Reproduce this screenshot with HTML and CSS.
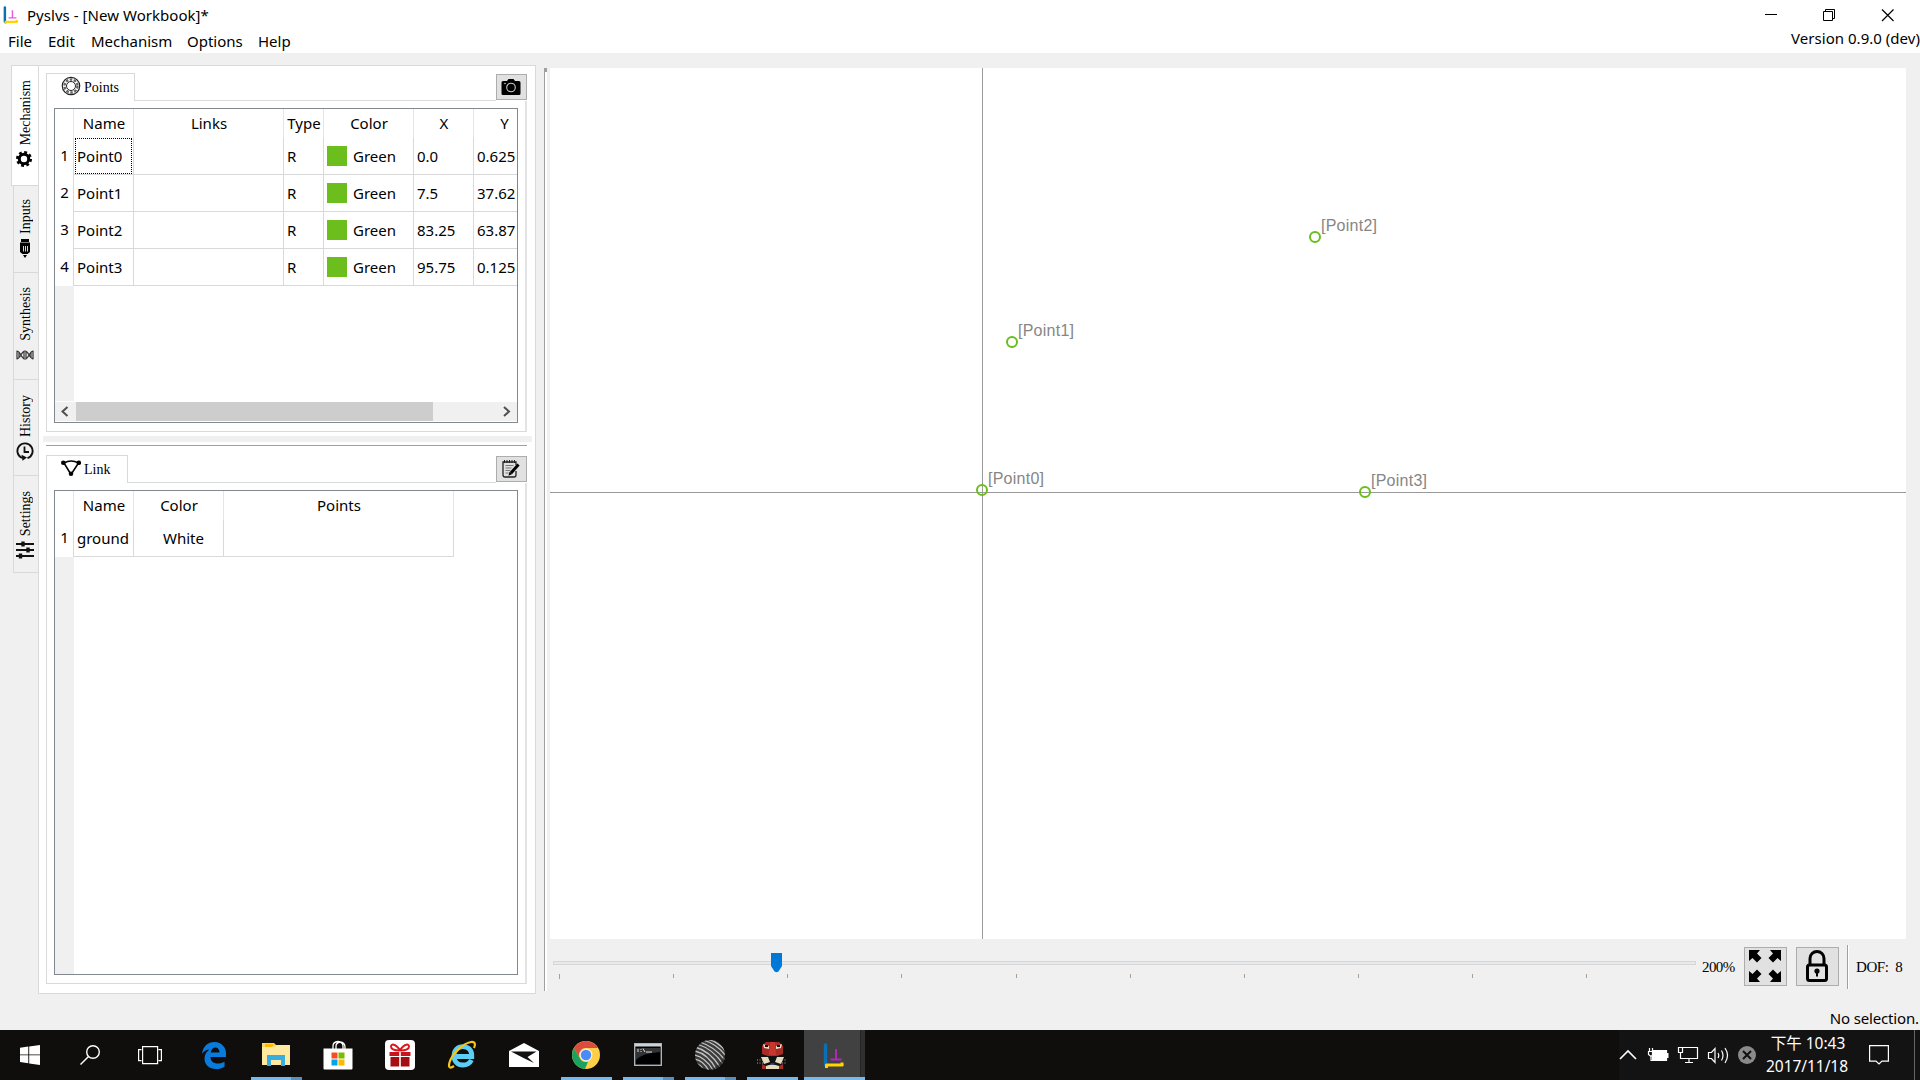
FILE: index.html
```html
<!DOCTYPE html>
<html lang="zh-Hant">
<head>
<meta charset="utf-8">
<title>Pyslvs - [New Workbook]*</title>
<link rel="stylesheet" href="styles.css">
</head>
<body>
<svg class="defs" width="0" height="0">
  <symbol id="logo" viewBox="0 0 22 25">
    <path d="M2.5 2v20" stroke="#0b6fb8" stroke-width="3.4" stroke-linecap="round" fill="none"/>
    <path d="M3.5 22H19" stroke="#ffd400" stroke-width="3.2" stroke-linecap="round" fill="none"/>
    <path d="M2 24h3M19 19.500v3" stroke="#ffd400" stroke-width="3" fill="none"/>
    <path d="M13 6v10M7.500 16.500h11" stroke="currentColor" stroke-width="2" fill="none"/>
  </symbol>
</svg>

<header class="top">
  <div class="titlebar">
    <svg class="title-icon" width="16" height="18"><use href="#logo"/></svg>
    <span class="title">Pyslvs - [New Workbook]*</span>
    <svg class="winctl" width="130" height="14" viewBox="0 0 130 14" fill="none" stroke="#000">
      <path d="M0 6.500h12"/>
      <path d="M58.500 3.500h9v9h-9zM60.500 3.500v-2h9v9h-2"/>
      <path d="M117 1.500l11.500 11.500M128.500 1.500L117 13" stroke-width="1.2"/>
    </svg>
  </div>
  <nav class="menubar">
    <span class="m-file">File</span><span class="m-edit">Edit</span><span class="m-mech">Mechanism</span><span class="m-opt">Options</span><span class="m-help">Help</span>
    <span class="version">Version 0.9.0 (dev)</span>
  </nav>
</header>

<main class="work">
  <aside class="side-tabs">
    <div class="side-tab active t-mech"><span>Mechanism</span>
      <svg width="18" height="20" viewBox="0 0 18 20"><circle cx="9" cy="10" r="4.700" fill="none" stroke="#000" stroke-width="3"/><circle cx="9" cy="10" r="6.700" fill="none" stroke="#000" stroke-width="2.600" stroke-dasharray="2.800 2.462"/></svg></div>
    <div class="side-tab t-inputs"><span>Inputs</span>
      <svg width="18" height="20" viewBox="0 0 18 20"><path d="M5 1h8v3H5zM4 4.500h10V14l-2.500 2h-5L4 14z"/><path d="M7.500 8v5.500M9.500 8v5.500M11.500 8v5.500" stroke="#eee" stroke-width=".9"/><path d="M7 17h4l-2 3z"/></svg></div>
    <div class="side-tab t-syn"><span>Synthesis</span>
      <svg width="18" height="20" viewBox="0 0 18 20" fill="none" stroke="#333" stroke-width="1.200"><path d="M.5 6c4.500 0 4.500 8 8.500 8s4-8 8.500-8M.5 14C5 14 5 6 9 6s4 8 8.500 8M1 6v8M8 7v6M10 7v6M17 6v8M3 7.500v5M15 7.500v5"/></svg></div>
    <div class="side-tab t-hist"><span>History</span>
      <svg width="18" height="20" viewBox="0 0 18 20" fill="none" stroke="#111" stroke-width="1.900"><path d="M11.500 17.200A7.600 7.600 0 1 0 6 17"/><path d="M8.500 5.500V11H13" stroke-width="1.800"/><path d="M5.500 13.800l5.500 2.700-4.500 3.300z" fill="#111" stroke="none"/></svg></div>
    <div class="side-tab t-set"><span>Settings</span>
      <svg width="18" height="20" viewBox="0 0 18 20" fill="none" stroke="#111"><path d="M0 4h18M0 10h18M0 16h18" stroke-width="2"/><path d="M7 1.500v5M12 7.500v5M4.500 13.500v5" stroke-width="3.400"/></svg></div>
  </aside>

  <section class="panel">
    <div class="group points">
      <div class="tabrow">
        <div class="tab tab-points">
          <svg width="20" height="20" viewBox="0 0 20 20" fill="none" stroke="#222"><circle cx="10" cy="10" r="8.700" stroke-width="1.200"/><circle cx="10" cy="10" r="6.500" stroke-width="2.400" stroke="#666" stroke-dasharray="2.600 1.480"/><circle cx="10" cy="10" r="4.500" fill="#fff" stroke-width="1"/></svg>
          <span>Points</span></div>
        <div class="tab-rest"></div>
        <button class="tool"><svg width="20" height="18" viewBox="0 0 20 18"><path d="M2 3h4l1.500-2h5L14 3h4q1.500 0 1.500 1.500v11Q19.500 17 18 17H2Q.5 17 .5 15.500v-11Q.5 3 2 3z"/><circle cx="10" cy="9.500" r="4.300" fill="none" stroke="#ccc" stroke-width="1.100"/><circle cx="4" cy="5.500" r=".8" fill="#ccc"/></svg></button>
      </div>
      <div class="group-body">
        <div class="frame">
          <div class="grid g-points head"><span></span><span>Name</span><span>Links</span><span>Type</span><span>Color</span><span>X</span><span>Y</span></div>
          <div class="grid g-points"><b>1</b><span class="focus">Point0</span><span></span><span>R</span><span><i></i>Green</span><span>0.0</span><span>0.625</span></div>
          <div class="grid g-points"><b>2</b><span>Point1</span><span></span><span>R</span><span><i></i>Green</span><span>7.5</span><span>37.62</span></div>
          <div class="grid g-points"><b>3</b><span>Point2</span><span></span><span>R</span><span><i></i>Green</span><span>83.25</span><span>63.87</span></div>
          <div class="grid g-points"><b>4</b><span>Point3</span><span></span><span>R</span><span><i></i>Green</span><span>95.75</span><span>0.125</span></div>
          <div class="gutter"></div>
          <div class="scroll">
            <svg width="21" height="19" viewBox="0 0 21 19"><path d="M12.500 5L7.500 9.500l5 4.500" fill="none" stroke="#505050" stroke-width="2"/></svg>
            <div class="thumb"></div>
            <svg width="21" height="19" viewBox="0 0 21 19"><path d="M8 5l5 4.500L8 14" fill="none" stroke="#505050" stroke-width="2"/></svg>
          </div>
        </div>
      </div>
    </div>
    <div class="hsplit"></div>
    <div class="hline"></div>
    <div class="group link">
      <div class="tabrow">
        <div class="tab tab-link">
          <svg width="20" height="20" viewBox="0 0 20 20"><path d="M3 5q7-4 14.500 0M3 5l7 11.500M17.500 5L10 16.500" fill="none" stroke="#000" stroke-width="1.500"/><circle cx="2.300" cy="4.800" r="2.300"/><circle cx="17.800" cy="4.800" r="2.300"/><circle cx="10" cy="15.800" r="2.300"/></svg>
          <span>Link</span></div>
        <div class="tab-rest"></div>
        <button class="tool"><svg width="20" height="20" viewBox="0 0 20 20" fill="none" stroke="#222"><path d="M15 12v4q0 2-2 2H4q-2 0-2-2V3h13v3" stroke-width="1.300"/><path d="M3.500 1v3M6 1v3M8.500 1v3M11 1v3M13.500 1v3"/><path d="M4.500 6.500h8M4.500 9h6M4.500 11.500h5M4.500 14h3" stroke="#777"/><path d="M17.500 5.500L10 14" stroke="#000" stroke-width="3"/><path d="M7.500 16.800l1-4 2.800 2.300z" fill="#000" stroke="none"/></svg></button>
      </div>
      <div class="group-body">
        <div class="frame">
          <div class="grid g-link head"><span></span><span>Name</span><span>Color</span><span>Points</span></div>
          <div class="grid g-link"><b>1</b><span>ground</span><span class="white">White</span><span></span></div>
          <div class="gutter"></div>
        </div>
      </div>
    </div>
  </section>

  <div class="vsplit"></div>

  <section class="view">
    <svg class="canvas" width="1356" height="871" viewBox="550 68 1356 871">
      <path d="M982.500 68v871M550 492.500h1356" stroke="#9a9a9a" fill="none"/>
      <g fill="none" stroke="#6abe1a" stroke-width="2"><circle cx="982" cy="490" r="5"/><circle cx="1012" cy="342" r="5"/><circle cx="1315" cy="237" r="5"/><circle cx="1365" cy="492" r="5"/></g>
      <g class="labels"><text x="988" y="484">[Point0]</text><text x="1018" y="336">[Point1]</text><text x="1321" y="231">[Point2]</text><text x="1371" y="486">[Point3]</text></g>
    </svg>
    <div class="controls">
      <svg class="slider" width="1150" height="40" viewBox="550 943 1150 40">
        <rect x="553.500" y="961.500" width="1142" height="3" fill="#e7eaea" stroke="#d6d6d6"/>
        <path d="M559.500 974v5M673.500 974v4M787.500 974v4M901.500 974v4M1016.500 974v4M1130.500 974v4M1244.500 974v4M1358.500 974v4M1472.500 974v4M1586.500 974v4" stroke="#a5a494"/>
        <path d="M771 953h11v13l-3.500 5.500-2 .7-2-.7-3.500-5.500z" fill="#0078d7"/>
      </svg>
      <span class="zoom">200%</span>
      <button class="big"><svg width="34" height="34" viewBox="0 0 34 34"><path d="M1 1h11L9 4.500l4.500 4.500-4.500 4.500L4.500 9 1 12z"/><path d="M33 1v11l-3.500-3-4.500 4.500L20.500 9 25 4.500 22 1zM1 33V22l3.500 3L9 20.500l4.500 4.500L9 29.500l3 3.500zM33 33H22l3-3.500-4.500-4.500 4.500-4.500 4.500 4.500 3.500-3z"/></svg></button>
      <button class="big"><svg width="34" height="34" viewBox="0 0 34 34" fill="none" stroke="#000" stroke-width="3"><rect x="7.500" y="16" width="19" height="15.500" rx="2"/><path d="M10 16V9.500a7 7 0 0 1 14 0V16"/><circle cx="17" cy="22" r="2.600" fill="#000" stroke="none"/><path d="M17 22v5.500" stroke-width="2"/></svg></button>
      <div class="sep"></div>
      <span class="dof">DOF:&nbsp; 8</span>
    </div>
  </section>
</main>

<footer class="status">No selection.</footer>

<div class="taskbar">
  <div class="sys"><svg width="20" height="20" viewBox="0 0 20 20" fill="#fff"><path d="M0 2.800L8.300 1.600v7.900H0zM9.200 1.500L20 0v9.500H9.200zM0 10.300h8.300v7.900L0 17.100zM9.200 10.300H20V20L9.200 18.400z"/></svg></div>
  <div class="sys"><svg width="20" height="20" viewBox="0 0 20 20" fill="none" stroke="#fff" stroke-width="1.400"><circle cx="13" cy="7" r="6.300"/><path d="M8.500 11.500L.5 19.500"/></svg></div>
  <div class="sys"><svg width="24" height="20" viewBox="0 0 24 20" fill="none" stroke="#fff" stroke-width="1.200"><path d="M4.600 1.600h15v17h-15zM3.500 4.600H.6v11h2.900M20.500 4.600h2.900v11h-2.900"/></svg></div>

  <div class="apps">
    <div class="app"><svg width="26" height="28" viewBox="0 0 26 28"><path fill="#0a7bdc" d="M1 13C2 5 7 1 13.500 1 21 1 25 7 25 12v4H9.500c0 4.500 3.500 6.500 7 6.500 3 0 5-.7 7-1.800v5C21 27.300 18.500 28 15 28 8 28 3.500 23.500 3.500 17.500c0-4 2-7 5-9C5.500 8.500 2.800 10 1 13zm8.700-1.500h8.800c0-3-1.500-5-4.200-5-2.600 0-4 2-4.600 5z"/></svg></div>
    <div class="app run split"><svg width="28" height="24" viewBox="0 0 28 24"><path fill="#f8d675" d="M0 0h12l2 2h14v20H0z"/><path fill="#ffe9a0" d="M0 4h13l2-2h13v20H0z"/><path fill="#ffb900" d="M3 1h9l-2 3H3z"/><path fill="#35aee2" d="M5 12h18v11h-4v-6H9v6H5z"/></svg></div>
    <div class="app"><svg width="30" height="30" viewBox="0 0 30 30"><path d="M10 9V6q0-4 5-4.500 5 .5 5 4.500v3M13 9V6q0-3 4-4 5 .5 5 5v2" fill="none" stroke="#fff" stroke-width="1.300"/><path fill="#fff" d="M.5 8.500h29v20q0 1-1 1h-27q-1 0-1-1z"/><path fill="#f25022" d="M8.500 12.500h6v6h-6z"/><path fill="#7fba00" d="M15.500 12.500h6v6h-6z"/><path fill="#00a4ef" d="M8.500 19.500h6v6h-6z"/><path fill="#ffb900" d="M15.500 19.500h6v6h-6z"/></svg></div>
    <div class="app"><svg width="30" height="30" viewBox="0 0 30 30"><rect width="30" height="30" rx="4" fill="#fff"/><path fill="#c8141c" d="M4.500 12h9.700v4H4.500zM15.800 12h9.700v4h-9.700z"/><path fill="#a50d12" d="M5.500 17h8.700v9.500H5.500zM15.800 17h8.700v9.500h-8.700z"/><path d="M15 10.500C10 10.500 6 9 6 6.500S10 3 15 10c5-7 9-6 9-3.500s-4 4-9 4z" fill="none" stroke="#d9191f" stroke-width="2"/></svg></div>
    <div class="app"><svg width="30" height="30" viewBox="0 0 30 30"><path d="M24.500 20q-2.500 5-8.500 5c-5.500 0-9-3.700-9-9 0-5.500 3.600-9.300 9-9.300 5.800 0 9 4 8.800 9.800H9" fill="none" stroke="#5ccdf5" stroke-width="4.800"/><path d="M7 26C3 29 1 27.500 2.500 22.500 5 14 16 3.500 24 2c4-.5 5 2 3 6" fill="none" stroke="#f5c518" stroke-width="2.200"/></svg></div>
    <div class="app"><svg width="30" height="24" viewBox="0 0 30 24"><path fill="#fff" d="M0 8l15-8 15 8v16H0z"/><path fill="#111" d="M2 8.500h25.500l-9 5.500 6.500 6-10.500-5z"/></svg></div>
    <div class="app run"><svg width="28" height="28" viewBox="0 0 28 28"><circle cx="14" cy="14" r="14" fill="#ffce44"/><path fill="#dd4b3e" d="M1.900 7A14 14 0 0 1 26.100 7H14a7 7 0 0 0-6.100 10.500z"/><path fill="#1ba261" d="M1.900 7L8 17.500A7 7 0 0 0 16 20.700L13 28A14 14 0 0 1 1.900 7z"/><circle cx="14" cy="14" r="6.400" fill="#f1f1f1"/><circle cx="14" cy="14" r="5.200" fill="#4c8bf5"/></svg></div>
    <div class="app run split"><svg width="28" height="24" viewBox="0 0 28 24"><rect x=".7" y=".7" width="26.600" height="21.600" fill="#000" stroke="#a9b4bc" stroke-width="1.400"/><path fill="#ccd3d8" d="M1 1h26v2.500H1z"/><path fill="#333" d="M2 5h24v4Q8 10 2 17z"/><path d="M4 6v3M7 6v1M7 8v1M9 5.500l2 3.500M12 9h6" stroke="#ddd"/></svg></div>
    <div class="app run split"><svg width="30" height="30" viewBox="0 0 30 30"><defs><clipPath id="ball"><circle cx="15" cy="15" r="15"/></clipPath></defs><g clip-path="url(#ball)"><path d="M0 0h30v30H0z" fill="#3c3c3c"/><path d="M-1 19Q8 20 14 31M-1 15Q10 17 18 30M0 11Q13 14 21 29M0 7Q15 11 25 27M2 4Q18 9 28 24M5 2Q20 7 30 20M8 0Q22 4 31 16M12-1Q24 2 31 12M17-1Q26 1 30 8M-1 23Q6 24 9 31" fill="none" stroke="#c4c4c4" stroke-width="1.300"/><path d="M10 30Q24 30 30 14v16z" fill="#222" opacity=".6"/></g></svg></div>
    <div class="app run"><svg width="30" height="30" viewBox="0 0 30 30"><path fill="#111" d="M4 1h23v28H4z"/><path fill="#a92b25" d="M5 6l4-4h13l4 4v8l-6 2h-9l-6-2zM5 24l4 2v3H5zM26 24l-4 2v3h4z"/><path fill="#e8dcc0" d="M6 4l6 2v3l-5-1zM25 4l-6 2v3l5-1zM4 17l7 0 2 5-6 2zM27 17l-7 0-2 5 6 2zM9 26q6-3 13 0v3H9z"/><path fill="#c8372f" d="M13 2h5l1 13h-7z"/><path fill="#2031c0" d="M13 23h5l-2 2z"/><path d="M8 6h3M20 6h3" stroke="#111" stroke-width="2"/><path d="M0 20h6M0 23h6M25 20h5M25 23h5" stroke="#aaa" stroke-dasharray="1 1.500"/></svg></div>
    <div class="app run active"><svg class="logo-app" width="22" height="25"><use href="#logo"/></svg></div>
  </div>

  <div class="tray">
    <svg width="110" height="20" viewBox="1619 1045 110 20" fill="none" stroke="#fff" stroke-width="1.200">
      <path d="M1620 1059l8-8 8 8" stroke-width="1.600"/>
      <path d="M1652.500 1050.500h14v10h-14z" fill="#fff"/><path d="M1667.500 1053v5" stroke-width="2"/><path d="M1648.500 1051.500h5v3l-2.500 2-2.500-2zM1649.500 1048v3M1652.500 1048v3M1651 1056v4.500h2"/>
      <path d="M1683 1047.500h14.500v11h-17v-5M1689 1058.500v3.500M1685 1062.500h8M1678.500 1047.500h4v5h-4zM1680.500 1053v6"/>
      <path d="M1708.500 1052.500h3l3.500-4v14l-3.500-4h-3zM1718 1053q1.500 2.500 0 5M1721.500 1050.500q3 5 0 10M1725 1048q5 7.500 0 15"/>
    </svg>
    <svg width="18" height="18" viewBox="0 0 18 18"><circle cx="9" cy="9" r="9" fill="#8a8a8a"/><path d="M5 5l8 8M13 5l-8 8" stroke="#111" stroke-width="2"/></svg>
    <div class="clock"><span class="time">下午 10:43</span><span class="date">2017/11/18</span></div>
    <svg class="note" width="20" height="20" viewBox="0 0 20 20" fill="none" stroke="#fff" stroke-width="1.200"><path d="M.6.600h18.800v15.500H13L10 19l-3-2.900H.6z"/></svg>
    <div class="desk"></div>
  </div>
</div>
</body>
</html>
```
FILE: styles.css
```css
* { box-sizing: border-box; }

body {
  margin: 0;
  width: 1920px;
  height: 1080px;
  overflow: hidden;
  display: flex;
  flex-direction: column;
  background: #f0f0f0;
  color: #000;
  font: 15px/20px "Noto Sans", "Noto Sans CJK TC", sans-serif;
}

svg { display: block; flex: none; }
.defs { position: absolute; }
span { white-space: nowrap; }

/* title and menu */
.top { height: 53px; background: #fff; flex: none; }
.titlebar { height: 29px; display: flex; align-items: center; padding: 0 25px 0 3px; }
.title-icon { color: #e45be4; }
.title { margin-left: 8px; flex: 1; letter-spacing: .04px; }
.menubar { display: flex; height: 24px; padding-left: 8px; line-height: 24px; }
.m-file { width: 40px; }
.m-edit { width: 43px; }
.m-mech { width: 96px; }
.m-opt { width: 71px; }
.version { margin-left: auto; line-height: 19px; letter-spacing: .03px; }

/* work area */
.work { display: flex; flex: none; height: 962px; }
.side-tabs { width: 38px; padding-top: 12px; display: flex; flex-direction: column; flex: none; }
.side-tab {
  margin-left: 13px;
  width: 25px;
  border: 1px solid #d9d9d9;
  border-top: 0;
  border-right: 0;
  display: flex;
  flex-direction: column;
  align-items: center;
  justify-content: flex-end;
  gap: 4px;
  padding-right: 2px;
  font: 14px/16px "Liberation Serif", serif;
}
.side-tab span { writing-mode: vertical-rl; transform: rotate(180deg); margin-left: 2px; }
.side-tab.active { margin-left: 11px; width: 28px; padding-right: 4px; background: #fff; border-top: 1px solid #d9d9d9; }
.side-tab.active span { margin-left: 4px; }
.t-mech { height: 121px; padding-bottom: 16px; }
.t-inputs { height: 87px; padding-bottom: 14px; }
.t-syn { height: 107px; padding-bottom: 14px; }
.t-hist { height: 96px; padding-bottom: 14px; }
.t-set { height: 97px; padding-bottom: 12px; }

.panel {
  width: 498px;
  height: 929px;
  margin-top: 12px;
  flex: none;
  border: 1px solid #d9d9d9;
  background: #fff;
  padding: 7px 3px 0 4px;
  display: flex;
  flex-direction: column;
}
.group { display: flex; flex-direction: column; margin: 0 3px; width: 481px; }
.points { height: 359px; }
.link { height: 529px; margin-top: 9px; }
.tabrow { display: flex; height: 28px; flex: none; }
.tab {
  display: flex;
  align-items: center;
  gap: 3px;
  padding: 0 0 4px 14px;
  border: 1px solid #d9d9d9;
  border-bottom: 0;
  font: 14px/20px "Liberation Serif", serif;
}
.tab span { padding-top: 5px; }
.tab-points { width: 89px; }
.tab-link { width: 82px; }
.tab-rest { flex: 1; border-bottom: 1px solid #d9d9d9; }
.tool, .big { border: 1px solid #adadad; background: #e1e1e1; display: flex; align-items: center; justify-content: center; }
.tool { width: 31px; height: 26px; margin-top: 1px; padding: 0 1px 0 0; }
.group-body {
  flex: 1;
  width: 481px;
  border: 1px solid #d9d9d9;
  border-top: 0;
  border-right: 2px solid #e3e3e3;
  padding: 7px 7px 8px 7px;
  display: flex;
}
.frame { flex: 1; border: 1px solid #828790; display: flex; flex-direction: column; overflow: hidden; }
.grid { display: grid; height: 37px; flex: none; }
.g-points { grid-template-columns: 19px 60px 150px 40px 90px 60px 60px; }
.g-link { grid-template-columns: 19px 60px 90px 230px; }
.grid > span { border-right: 1px solid #d9d9d9; border-bottom: 1px solid #d9d9d9; padding: 0 0 1px 3px; display: flex; align-items: center; }
.grid > b { font-weight: normal; border-right: 1px solid #d9d9d9; padding: 7px 0 0 1px; text-align: center; }
.grid.head { height: 29px; }
.grid.head > span { justify-content: center; border-bottom: 0; border-color: #e5e5e5; padding: 0 0 1px 1px; }
.grid > .focus { position: relative; }
.focus::after { content: ""; position: absolute; inset: 0 1px 0 1px; border: 1px dotted #000; }
.grid i { width: 20px; height: 20px; margin-right: 6px; background: #6cbe1c; }
.grid > .white { padding-left: 29px; }
.g-points > span:last-child { border-right: 0; }
.gutter { width: 19px; flex: 1; background: #f0f0f0; }
.scroll { height: 19px; margin: 1px 0; background: #f0f0f0; display: flex; }
.thumb { width: 357px; margin-right: auto; background: #cdcdcd; }
.hsplit { height: 6px; margin-top: 4px; background: #f0f0f0; flex: none; }
.hline { height: 1px; margin: 3px 5px 0 3px; background: #a0a0a0; flex: none; }

.vsplit { width: 3px; height: 923px; margin: 15px 0 0 8px; border-left: 1px solid #a0a0a0; border-top: 4px solid #a0a0a0; background: #fff; flex: none; }

.view { width: 1360px; margin: 15px 0 0 3px; display: flex; flex-direction: column; }
.canvas { background: #fff; }
.labels { font: 16px "Liberation Sans", sans-serif; fill: #868686; letter-spacing: .25px; }
.controls { display: flex; height: 58px; font: 15px/18px "Liberation Serif", serif; }
.slider { margin-top: 4px; }
.zoom { width: 42px; padding: 19px 0 0 2px; letter-spacing: -.6px; }
.big { width: 43px; height: 39px; margin: 8px 9px 0 2px; padding: 0 2px 1px 0; }
.big + .big { margin: 8px 8px 0 0; }
.sep { width: 2px; height: 44px; margin-top: 6px; border-left: 1px solid #a0a0a0; background: #fff; }
.dof { padding: 19px 0 0 7px; letter-spacing: -.4px; }

.status { flex: 1; text-align: right; padding-right: 1px; line-height: 7px; letter-spacing: -.15px; }

/* taskbar */
.taskbar { height: 50px; flex: none; background: #0f0e0d; display: flex; color: #fff; }
.sys { width: 60px; display: flex; align-items: center; justify-content: center; }
.apps { display: flex; gap: 11px; margin-left: 9px; }
.app { width: 51px; border-bottom: 3px solid transparent; display: flex; align-items: center; justify-content: center; padding: 3px 2px 0 0; }
.app.run { border-image: linear-gradient(#76b9ed, #76b9ed) 0 0 3; }
.app.split { border-image: linear-gradient(90deg, #76b9ed 40px, #5a8ebb 40px) 0 0 3; }
.app.active { width: 61px; margin-left: -5px; background: linear-gradient(90deg, #414141 56px, #1a1a1a 56px, #303030 57px); }
.logo-app { color: #b028b8; }
.tray { margin-left: auto; display: flex; align-items: center; background: #131313; }
.tray svg + svg { margin-left: 9px; }
.clock { width: 94px; margin-left: 4px; text-align: center; display: flex; flex-direction: column; line-height: 23px; font-size: 15.500px; }
.time { padding-left: 2px; }
.date { letter-spacing: -.05px; }
.tray .note { margin-left: 15px; }
.desk { width: 6px; height: 50px; margin-left: 25px; border-left: 1px solid #666; }
```
